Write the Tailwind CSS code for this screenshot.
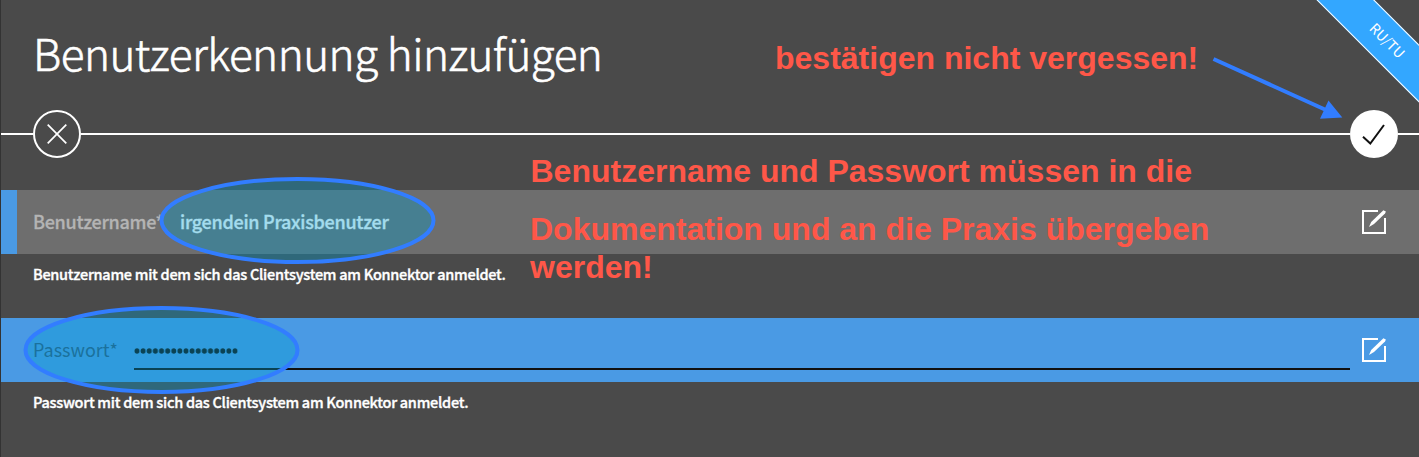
<!DOCTYPE html>
<html lang="de">
<head>
<meta charset="utf-8">
<title>Benutzerkennung hinzufügen</title>
<script src="https://cdn.jsdelivr.net/npm/@tailwindcss/browser@4"></script>
</head>
<body class="relative h-[457px] w-[1419px] overflow-hidden border-l border-[#333333] bg-[#4a4a4a] font-['Noto_Sans_CJK_SC',sans-serif] text-white">
  <header class="flex h-[110px] items-start pl-8 pt-5">
    <h1 class="whitespace-nowrap text-[44px] leading-[64px] font-light tracking-[-0.51px] [-webkit-text-stroke:0.6px_white]">Benutzerkennung hinzufügen</h1>
  </header>

  <div class="flex h-12 items-center">
    <div class="h-0.5 w-8 bg-white"></div>
    <button class="flex size-12 items-center justify-center rounded-full border-2 border-white" aria-label="Abbrechen">
      <svg class="size-6" viewBox="0 0 24 24" fill="none" stroke="white" stroke-width="1.7"><path d="M2.7 2.7 21.3 21.3M21.3 2.7 2.7 21.3"/></svg>
    </button>
    <div class="h-0.5 grow bg-white"></div>
    <button class="flex size-12 items-center justify-center rounded-full bg-white" aria-label="Bestätigen">
      <svg class="size-6" viewBox="0 0 24 24" fill="none" stroke="#111111" stroke-width="2"><path d="M1 14.8 8.3 21.6 22 3"/></svg>
    </button>
    <div class="h-0.5 w-[21px] bg-white"></div>
  </div>

  <main class="pt-8">
    <section class="h-32">
      <div class="flex h-16 items-center border-l-16 border-[#4a9ae4] bg-[#6e6e6e] pl-4 pr-[33px]">
        <label class="w-[147px] whitespace-nowrap pb-0.5 text-[18px] leading-6 font-medium tracking-[-0.3px] text-[#b4b4b4] [-webkit-text-stroke:0.3px_#b4b4b4]">Benutzername*</label>
        <span class="grow whitespace-nowrap pb-0.5 text-[18px] leading-6 font-medium tracking-[-0.28px] [-webkit-text-stroke:0.3px_white]">irgendein Praxisbenutzer</span>
        <svg class="size-6" viewBox="0 0 24 24" fill="none" stroke="white"><path stroke-width="2" d="M16 1H1V23H23V8"/><path fill="white" stroke="none" d="M21.4.2 23.9 1.6 23 3.4 12 14.1 7 17 9.2 12Z"/></svg>
      </div>
      <p class="whitespace-nowrap pl-8 pt-2.5 text-[14.5px] leading-5 font-medium tracking-[-0.27px] [-webkit-text-stroke:0.35px_white]">Benutzername mit dem sich das Clientsystem am Konnektor anmeldet.</p>
    </section>
    <section>
      <div class="flex h-16 items-center bg-[#4a9ae4] pl-8 pr-[33px]">
        <label class="w-[101px] whitespace-nowrap pb-0.5 text-[18px] leading-6 text-[#2b5880]">Passwort*</label>
        <div class="mr-3 flex h-10 grow items-center border-b-2 border-[#111111]">
          <svg class="mt-1 h-2 w-[104px] fill-[#111111]" viewBox="0 0 104 8" aria-label="Passwort">
            <defs><pattern id="dots" width="6.125" height="8" patternUnits="userSpaceOnUse"><ellipse cx="3" cy="4" rx="2.5" ry="2.7"/></pattern></defs>
            <rect width="104" height="8" fill="url(#dots)"/>
          </svg>
        </div>
        <svg class="size-6" viewBox="0 0 24 24" fill="none" stroke="white"><path stroke-width="2" d="M16 1H1V23H23V8"/><path fill="white" stroke="none" d="M21.4.2 23.9 1.6 23 3.4 12 14.1 7 17 9.2 12Z"/></svg>
      </div>
      <p class="whitespace-nowrap pl-8 pt-2.5 text-[14.5px] leading-5 font-medium tracking-[-0.27px] [-webkit-text-stroke:0.35px_white]">Passwort mit dem sich das Clientsystem am Konnektor anmeldet.</p>
    </section>
  </main>

  <div class="absolute top-[20px] left-[1285px] flex h-[41px] w-[200px] rotate-45 items-center justify-center border-y border-white bg-[#33a7ff] pl-0.5 pb-0.5 text-[14px]">RU/TU</div>

  <svg class="absolute top-0 -left-px h-[457px] w-[1419px]" viewBox="0 0 1419 457">
    <g fill="rgb(0 158 208 / .36)" stroke="#327dff" stroke-width="4">
      <ellipse cx="297.5" cy="220.5" rx="136" ry="41.5"/>
      <ellipse cx="161.5" cy="350" rx="136" ry="42"/>
    </g>
    <path d="M1213.5 59 1326 110" stroke="#327dff" stroke-width="4"/>
    <path d="M1328.5 100.5 1342.3 117.5 1320 118.7Z" fill="#327dff"/>
  </svg>
  <div class="absolute inset-0 font-['Liberation_Sans',Arial,sans-serif] text-[32px] leading-[38px] font-bold whitespace-nowrap text-[#ff5748]">
    <p class="absolute top-[39px] left-[774px]">bestätigen nicht vergessen!</p>
    <p class="absolute top-[152px] left-[529.5px]">Benutzername und Passwort müssen in die</p>
    <p class="absolute top-[210px] left-[529px]">Dokumentation und an die Praxis übergeben<br>werden!</p>
  </div>
</body>
</html>
